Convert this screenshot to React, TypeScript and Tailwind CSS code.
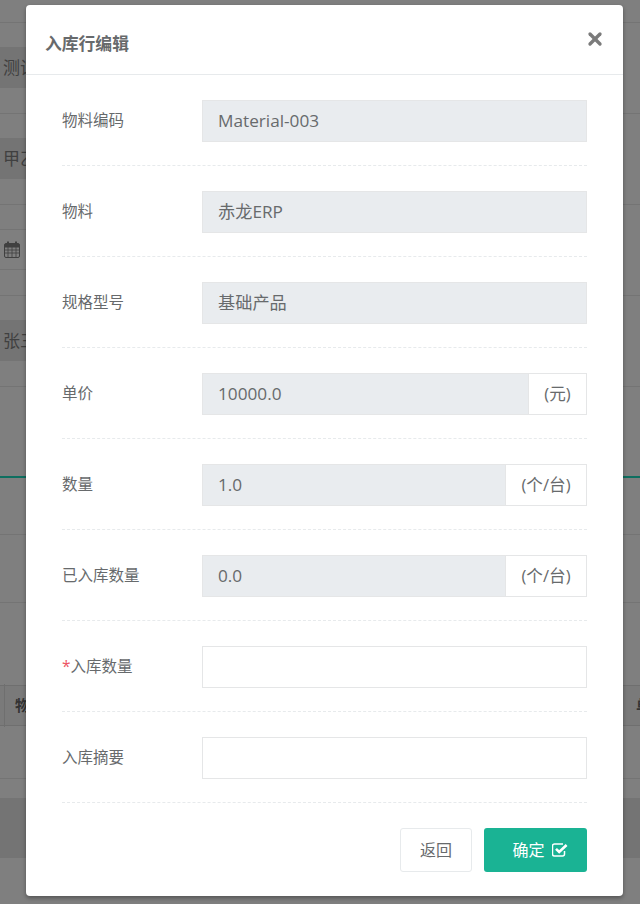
import { X } from "lucide-react";

const fontStack = "font-['Open_Sans','Noto_Sans_CJK_SC',sans-serif]";

interface FieldProps {
  label: string;
  value?: string;
  unit?: string;
  unitWidth?: string;
  required?: boolean;
}

const Field = ({ label, value, unit, unitWidth, required }: FieldProps) => {
  const readOnly = value !== undefined;

  return (
    <div className="mb-[25px] flex h-[66px] items-start border-b border-dashed border-[#e7eaec]">
      <div className="w-[140px] pt-[10px] text-[15.5px] leading-[20px] text-[#676a6c]">
        {required && <span className="text-[#ed5565]">*</span>}
        {label}
      </div>
      <div className="flex h-[42px] flex-1">
        <div
          className={`flex flex-1 items-center border border-[#e5e6e7] px-[15px] pb-[1px] text-[17.2px] text-[#676a6c] ${
            readOnly ? "bg-[#e9ecef]" : "bg-white"
          }`}
        >
          {value}
        </div>
        {unit && (
          <div
            className={`flex items-center justify-center border border-l-0 border-[#e5e6e7] bg-white text-[16.6px] text-[#676a6c] ${unitWidth}`}
          >
            {unit}
          </div>
        )}
      </div>
    </div>
  );
};

const CheckSquareIcon = () => (
  <svg viewBox="0 0 16 14" className="h-[14px] w-[16px]" fill="none" stroke="currentColor">
    <path d="M12.5 8v3a2 2 0 0 1-2 2h-8a2 2 0 0 1-2-2V3a2 2 0 0 1 2-2h8.5" strokeWidth="1.5" />
    <path d="M4 5.8l3.2 3.2L14.6 2" strokeWidth="2.6" />
  </svg>
);

const CalendarIcon = () => (
  <svg viewBox="0 0 16 17" className="h-[17px] w-[16px]" fill="none" stroke="#404040">
    <rect x="0.5" y="2.5" width="15" height="14" rx="1.5" />
    <path d="M1 3.5h14v2.5H1z" fill="#404040" />
    <path d="M0.5 9h15M0.5 12h15M4 6v10M8 6v10M12 6v10" strokeWidth="0.8" />
    <path d="M4 0.5v3.5M12 0.5v3.5" strokeWidth="2" />
  </svg>
);

const BackgroundRow = ({ children, band }: { children?: React.ReactNode; band?: boolean }) => (
  <div className="h-[91px] border-b border-[#747474] pt-[24px]">
    <div
      className={`flex h-[41px] w-[600px] items-center pl-[3px] ${band ? "bg-[#747474]" : "border-y border-[#747474]"}`}
    >
      {children}
    </div>
  </div>
);

const BackgroundPage = () => (
  <div className="h-[904px] bg-[#7f7f7f] text-[17px] text-[#404040]">
    <div className="h-[23px] border-b border-[#747474]" />
    <BackgroundRow band>测试</BackgroundRow>
    <BackgroundRow band>甲乙</BackgroundRow>
    <BackgroundRow>
      <span className="pl-[1px]">
        <CalendarIcon />
      </span>
    </BackgroundRow>
    <BackgroundRow band>张三</BackgroundRow>
    <div className="h-[89px]" />
    <div className="h-[2px] bg-[#0e6f60]" />
    <div className="h-[57px] border-b border-[#747474]" />
    <div className="h-[68px] border-b border-[#747474]" />
    <div className="h-[82px]" />
    <div className="flex h-[41px] items-center justify-between border-y border-[#6f6f6f] bg-[#7a7a7a] text-[15px] font-bold text-[#333333]">
      <span className="ml-[4px] border-l border-[#6f6f6f] py-[10px] pl-[10px]">物料</span>
      <span className="mr-[-26px]">单价</span>
    </div>
    <div className="h-[53px] border-b border-[#747474]" />
    <div className="h-[19px]" />
    <div className="h-[60px] bg-[#747474]" />
  </div>
);

export default function App() {
  return (
    <div className={`relative h-[904px] w-[640px] overflow-hidden ${fontStack}`}>
      <BackgroundPage />

      <div className="absolute left-[26px] top-[5px] h-[891px] w-[597px] rounded-[4px] bg-white shadow-[0_2px_4px_rgba(0,0,0,0.35)]">
        <div className="flex h-[70px] items-start justify-between border-b border-[#e7eaec] pl-[19px] pr-[18px]">
          <h4 className="pt-[27px] text-[16.8px] font-bold leading-[24px] text-[#676a6c]">入库行编辑</h4>
          <X className="mt-[24px] h-[20px] w-[20px] text-[#7b7b7b]" strokeWidth={4} />
        </div>

        <div className="pl-[36px] pr-[36px] pt-[25px]">
          <Field label="物料编码" value="Material-003" />
          <Field label="物料" value="赤龙ERP" />
          <Field label="规格型号" value="基础产品" />
          <Field label="单价" value="10000.0" unit="(元)" unitWidth="w-[58px]" />
          <Field label="数量" value="1.0" unit="(个/台)" unitWidth="w-[81px]" />
          <Field label="已入库数量" value="0.0" unit="(个/台)" unitWidth="w-[81px]" />
          <Field label="入库数量" required />
          <Field label="入库摘要" />

          <div className="flex justify-end gap-[12px]">
            <button className="h-[44px] w-[72px] rounded-[3px] border border-[#e7eaec] bg-white text-[16px] text-[#676a6c]">
              返回
            </button>
            <button className="flex h-[44px] w-[103px] items-center justify-center gap-[7px] rounded-[3px] bg-[#1ab394] pl-[9px] text-[16px] text-white">
              确定
              <CheckSquareIcon />
            </button>
          </div>
        </div>
      </div>
    </div>
  );
}
